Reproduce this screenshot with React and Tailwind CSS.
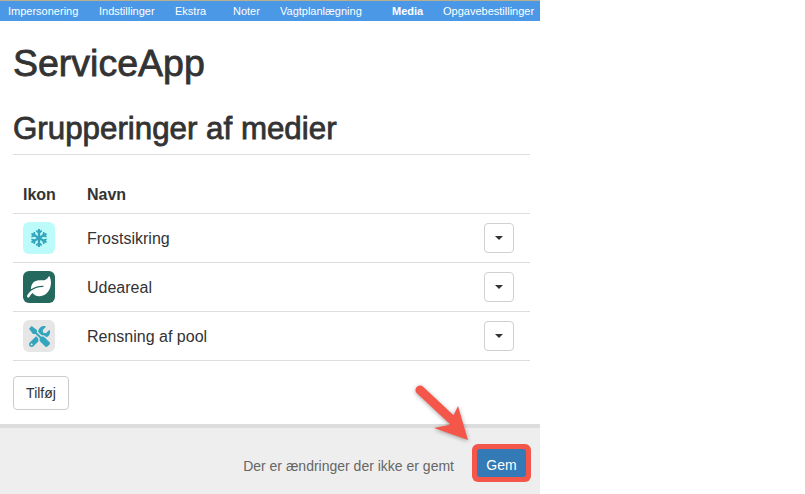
import React from "react";
import { FaSnowflake, FaLeaf, FaTools } from "react-icons/fa";

const NAV = [
  { label: "Impersonering", className: "w-[91px]" },
  { label: "Indstillinger", className: "w-[76px]" },
  { label: "Ekstra", className: "w-[58px]" },
  { label: "Noter", className: "w-[47px]" },
  { label: "Vagtplanlægning", className: "w-[112px]" },
  { label: "Media", className: "w-[51px] font-bold" },
  { label: "Opgavebestillinger", className: "" },
];

const ROWS = [
  { name: "Frostsikring", box: "bg-[#bdfbfb]", icon: "h-[18px] w-[18px] text-[#33a5bc]", Icon: FaSnowflake },
  { name: "Udeareal", box: "bg-[#24685e]", icon: "h-[24px] w-[24px] text-white", Icon: FaLeaf },
  { name: "Rensning af pool", box: "bg-[#e6e6e6]", icon: "h-[21px] w-[21px] text-[#33a5bc]", Icon: FaTools },
];

const Row = ({ name, box, icon, Icon }) => (
  <div className="flex h-[49px] items-center border-b border-[#ddd] pl-[10px] pr-4">
    <div className={`flex h-8 w-8 items-center justify-center rounded-md ${box}`}>
      <Icon className={icon} />
    </div>
    <span className="ml-8 flex-1 pt-[2px] text-[16px] text-[#333]">{name}</span>
    <button className="flex h-[30px] w-[30px] items-center justify-center rounded-[4px] border border-[#d0d0d0] bg-white">
      <span className="h-0 w-0 border-x-[4px] border-t-[4px] border-x-transparent border-t-[#333]" />
    </button>
  </div>
);

const App = () => {
  return (
    <div className="relative h-[494px] w-[805px] overflow-hidden bg-white font-['Liberation_Sans',Arial,sans-serif] text-[#333]">
      <div className="flex h-[494px] w-[540px] flex-col">
        <nav className="flex h-[21px] items-center border-t border-[#b9ae8e] bg-[#4a98e6] pl-2 text-[11px] text-white">
          {NAV.map((item) => (
            <span key={item.label} className={`whitespace-nowrap ${item.className}`}>
              {item.label}
            </span>
          ))}
        </nav>

        <div className="flex-1 pl-[13px] pr-[10px]">
          <h1 className="mt-[20px] text-[37.5px] leading-[44px] [-webkit-text-stroke:0.8px_#333]">ServiceApp</h1>
          <h2 className="mt-[24px] border-b border-[#ddd] pb-[6px] text-[31.3px] leading-[39px] [-webkit-text-stroke:0.8px_#333]">
            Grupperinger af medier
          </h2>
          <div className="mt-[20px]">
            <div className="flex h-[39px] items-center border-b border-[#ddd] pl-[10px] pt-[2px] text-[16px] font-bold">
              <span className="w-[64px]">Ikon</span>
              <span>Navn</span>
            </div>
            {ROWS.map((row) => (
              <Row key={row.name} {...row} />
            ))}
          </div>
          <button className="mt-[15px] h-[34px] w-[56px] rounded-[4px] border border-[#ccc] bg-white text-[14px]">
            Tilføj
          </button>
        </div>

        <footer className="flex h-[70px] items-center justify-end border-t-4 border-[#ddd] bg-[#eee] pr-[9px] pt-[4px]">
          <span className="mr-[18px] mt-[6px] text-[14px] text-[#666]">Der er ændringer der ikke er gemt</span>
          <div className="rounded-[6px] bg-[#f4574a] p-[5px]">
            <button className="h-[28px] w-[49px] rounded-[3px] bg-[#337ab7] pt-[5px] text-[14px] leading-[18px] text-white">Gem</button>
          </div>
        </footer>
      </div>

      {/* pil der peger på knappen */}
      <svg className="absolute left-[405px] top-[378px] drop-shadow-[0_1px_2px_rgba(0,0,0,0.35)]" width="80" height="70" viewBox="0 0 80 70">
        <path d="M15 12 L46 41" stroke="#f4574a" strokeWidth="9" strokeLinecap="round" fill="none" />
        <path d="M53 28 L63 62 L29 50 L44 47 Z" fill="#f4574a" />
      </svg>
    </div>
  );
};

export default App;
